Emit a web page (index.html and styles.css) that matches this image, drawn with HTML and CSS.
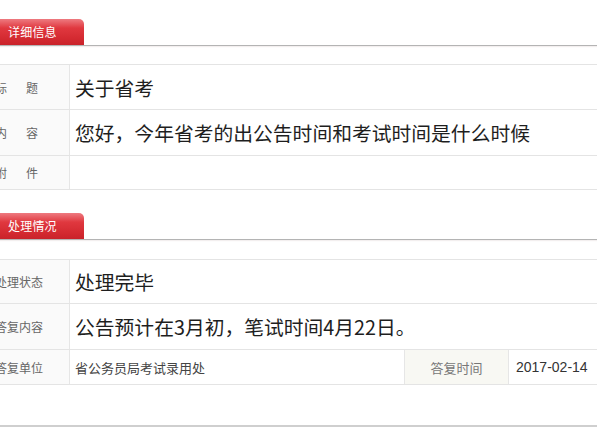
FILE: index.html
```html
<!DOCTYPE html>
<html lang="zh-CN">
<head>
<meta charset="utf-8">
<title>详细信息</title>
<link rel="stylesheet" href="styles.css">
</head>
<body>
<div class="page">
  <section class="section first">
    <div class="tabbar"><div class="tab">详细信息</div></div>
    <div class="table">
      <div class="row r1">
        <div class="label two">标题</div>
        <div class="value big">关于省考</div>
      </div>
      <div class="row r2">
        <div class="label two">内容</div>
        <div class="value big">您好，今年省考的出公告时间和考试时间是什么时候</div>
      </div>
      <div class="row r3">
        <div class="label two">附件</div>
        <div class="value"></div>
      </div>
    </div>
  </section>
  <section class="section second">
    <div class="tabbar"><div class="tab">处理情况</div></div>
    <div class="table">
      <div class="row r4">
        <div class="label">处理状态</div>
        <div class="value big">处理完毕</div>
      </div>
      <div class="row r5">
        <div class="label">答复内容</div>
        <div class="value big">公告预计在3月初，笔试时间4月22日。</div>
      </div>
      <div class="row r6 quad">
        <div class="label">答复单位</div>
        <div class="value small">省公务员局考试录用处</div>
        <div class="sublabel">答复时间</div>
        <div class="value small date">2017-02-14</div>
      </div>
    </div>
  </section>
  <div class="bottomline"></div>
</div>
</body>
</html>
```

FILE: styles.css
```css
html, body {
  margin: 0;
  padding: 0;
  background: #ffffff;
  overflow: hidden;
}
body {
  width: 597px;
  height: 428px;
  font-family: "Noto Sans CJK SC", "Noto Sans", sans-serif;
  color: #222;
}
.page {
  width: 623px;
  margin-left: -13px;
  padding-top: 19px;
}
.tabbar {
  border-bottom: 1px solid #b4b4b4;
  height: 26px;
  box-shadow: 0 1px 1px rgba(220, 210, 210, 0.35);
}
.tab {
  width: 76px;
  height: 26px;
  padding-left: 21px;
  box-sizing: content-box;
  background: linear-gradient(#ee7a80 0%, #e0383f 35%, #d42a31 75%, #c9222a 100%);
  border-top-right-radius: 5px;
  color: #fff;
  font-size: 12px;
  line-height: 26px;
  letter-spacing: 0.2px;
}
.table {
  margin-top: 18px;
  border-top: 1px solid #e4e4e4;
}
.second {
  margin-top: 23px;
}
.second .table {
  margin-top: 19px;
}
.row {
  display: grid;
  grid-template-columns: 83px 1fr;
  border-bottom: 1px solid #e4e4e4;
}
.r1 { height: 44px; }
.r2 { height: 45px; }
.r3 { height: 33px; }
.r4 { height: 43px; }
.r5 { height: 45px; }
.r6 { height: 34px; }
.quad {
  grid-template-columns: 83px 1fr 105px 101px;
}
.label {
  background: #fafafa;
  border-right: 1px solid #e6e6e6;
  padding-left: 8px;
  font-size: 12px;
  color: #666;
  display: flex;
  align-items: center;
  white-space: nowrap;
}
.label.two {
  letter-spacing: 19px;
}
.value {
  display: flex;
  align-items: center;
  padding-left: 5px;
  white-space: nowrap;
}
.big {
  font-size: 19.8px;
  color: #1e1e1e;
}
.small {
  font-size: 13px;
  color: #444;
}
.sublabel {
  background: #f8f8f3;
  border-left: 1px solid #e6e6e6;
  border-right: 1px solid #e6e6e6;
  font-size: 13px;
  color: #777;
  display: flex;
  align-items: center;
  justify-content: center;
}
.date {
  padding-left: 7px;
  font-family: "Liberation Sans", "Noto Sans", sans-serif;
  font-size: 14px;
  color: #333;
}
.bottomline {
  margin-top: 40px;
  border-bottom: 2px solid #cfcfcf;
}
```
